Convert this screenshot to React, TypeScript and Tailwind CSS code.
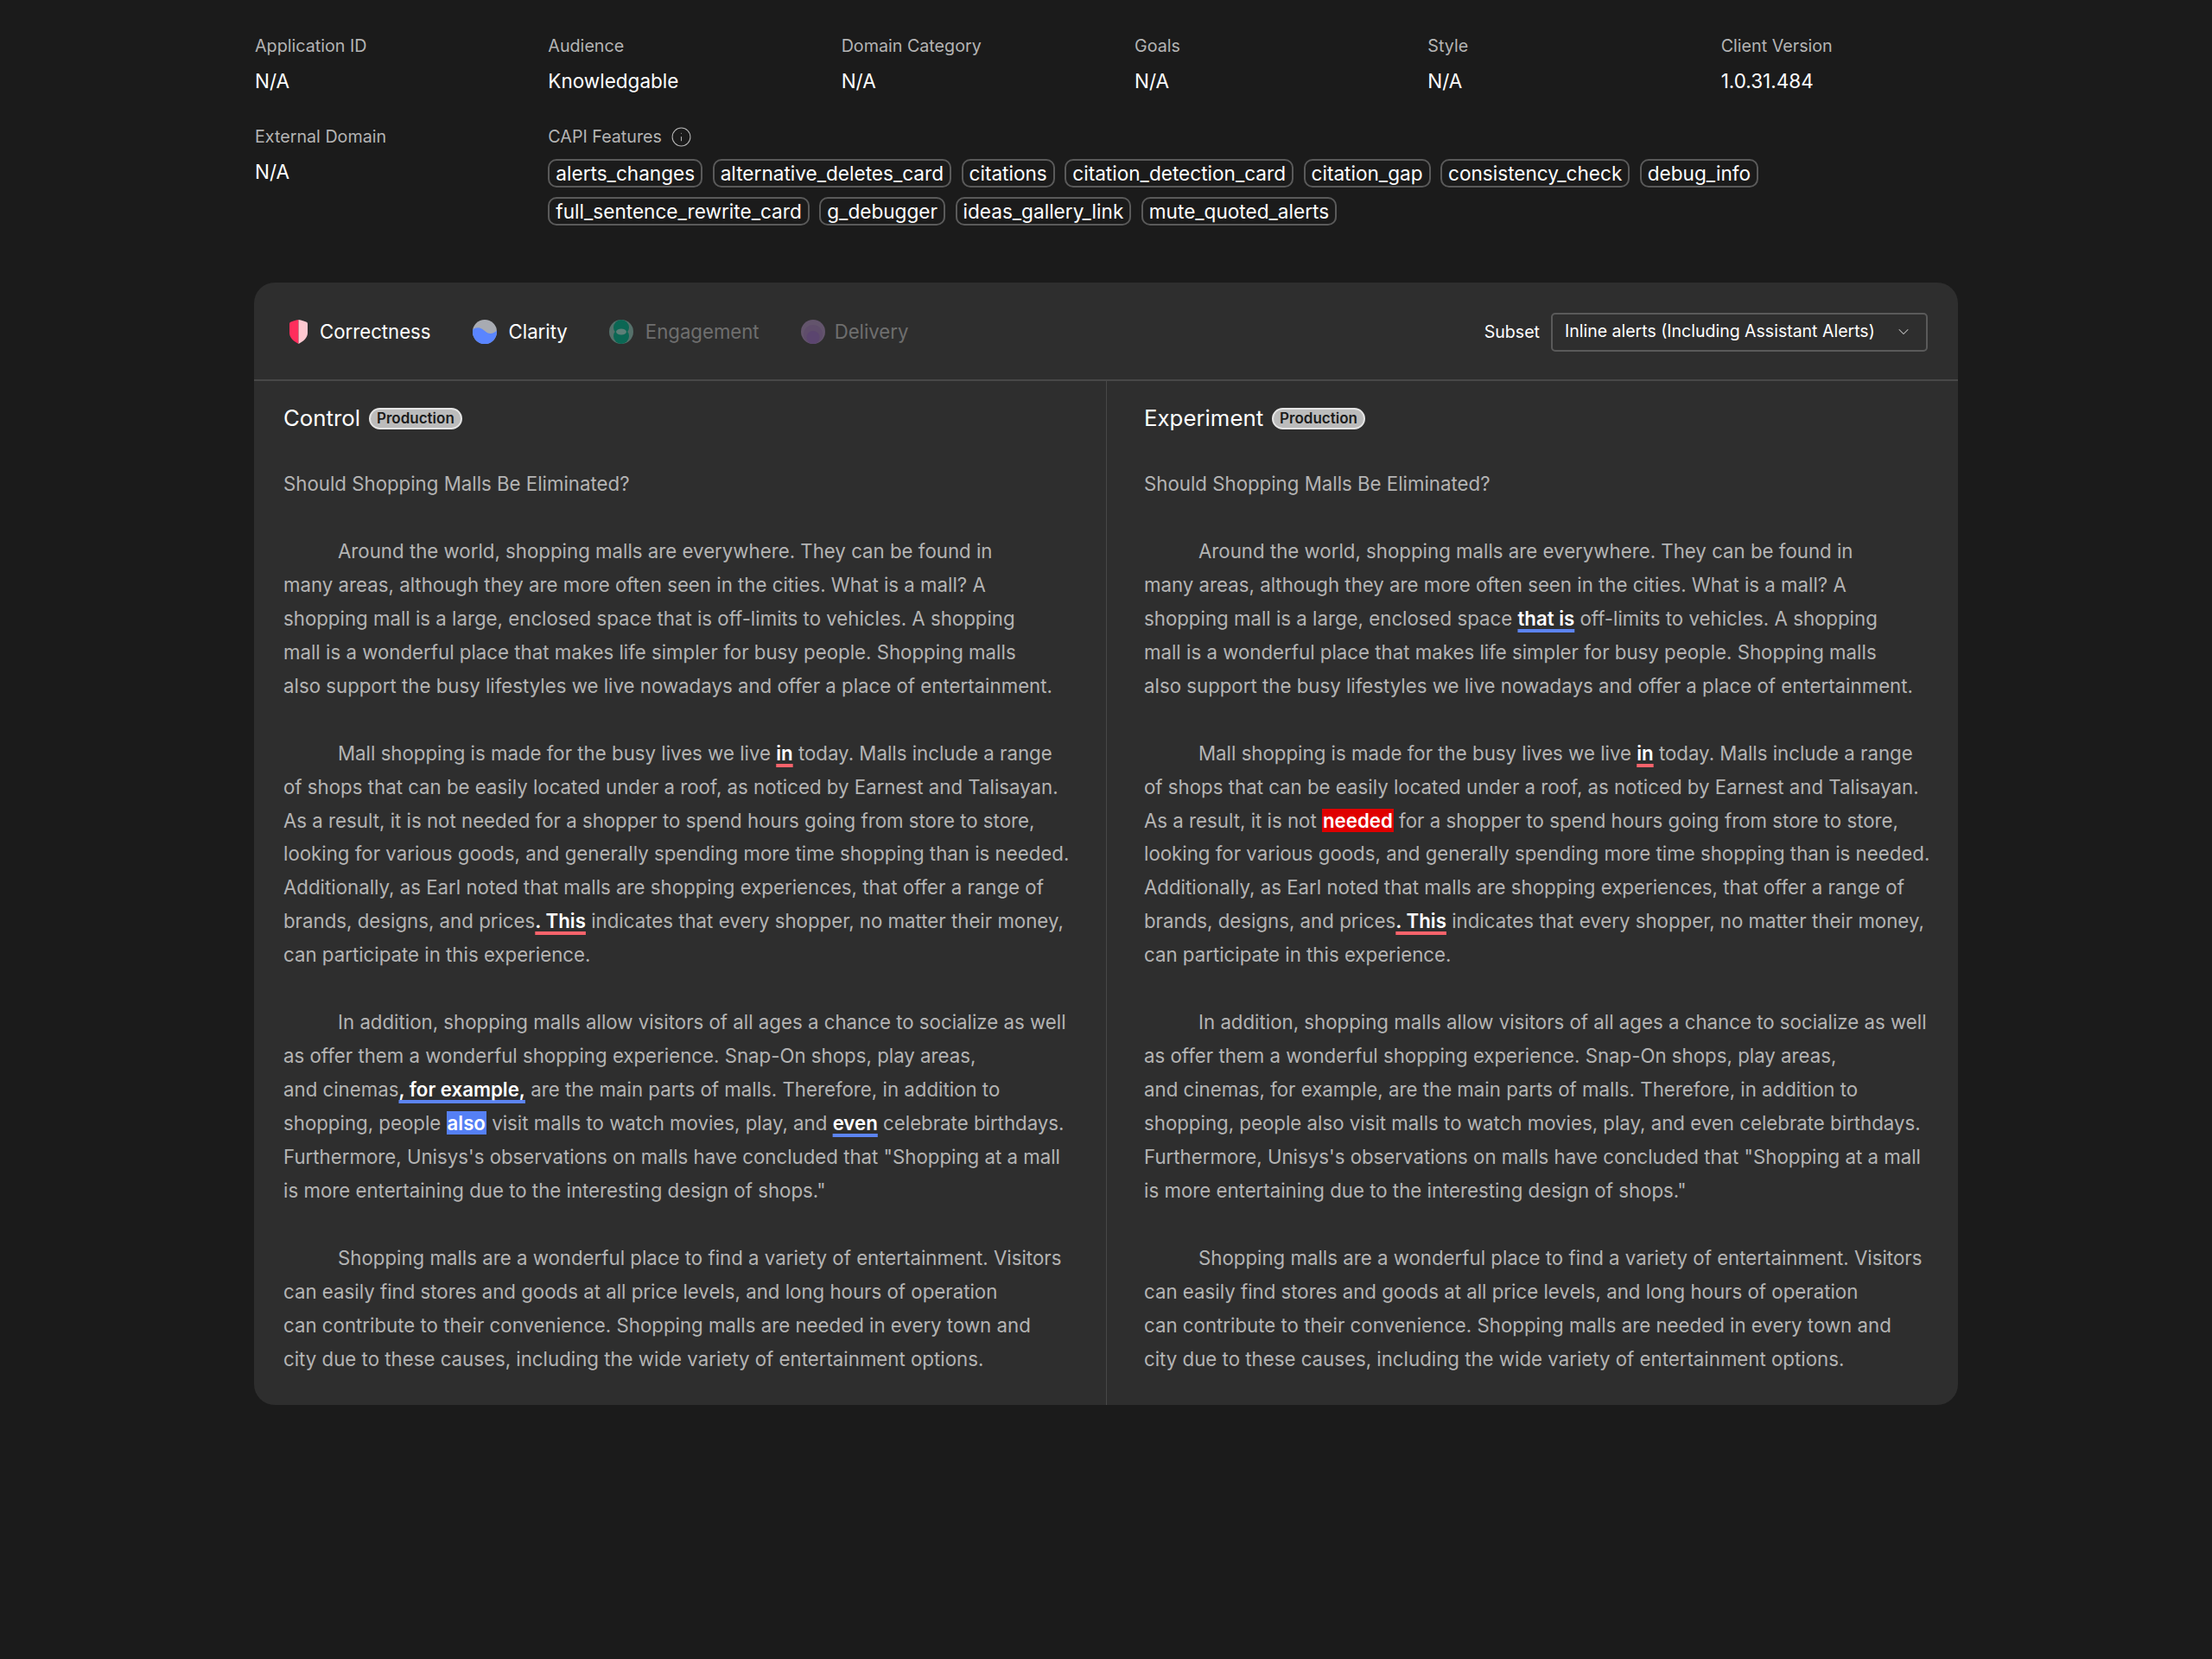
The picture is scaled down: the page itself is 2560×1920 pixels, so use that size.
import { ChevronDown, Info } from "lucide-react";
import type { ReactNode } from "react";

const topFields = [
  { label: "Application ID", value: "N/A" },
  { label: "Audience", value: "Knowledgable" },
  { label: "Domain Category", value: "N/A" },
  { label: "Goals", value: "N/A" },
  { label: "Style", value: "N/A" },
  { label: "Client Version", value: "1.0.31.484" },
];

const capiFeatures = [
  "alerts_changes",
  "alternative_deletes_card",
  "citations",
  "citation_detection_card",
  "citation_gap",
  "consistency_check",
  "debug_info",
  "full_sentence_rewrite_card",
  "g_debugger",
  "ideas_gallery_link",
  "mute_quoted_alerts",
];

function ShieldIcon() {
  return (
    <svg width="21" height="28" viewBox="0 0 21 28">
      <path d="M10.5 0C7 .6 3.5 1.6 1.2 2.7.4 3.1 0 3.7 0 4.6V15.5C0 21 5 25 10.5 28Z" fill="#ff2d5c" />
      <path d="M10.5 0C14 .6 17.5 1.6 19.8 2.7c.8.4 1.2 1 1.2 1.9V15.5C21 21 16 25 10.5 28Z" fill="#ffc8d0" />
    </svg>
  );
}

function ClarityIcon() {
  return (
    <svg width="28" height="28" viewBox="0 0 28 28">
      <circle cx="14" cy="14" r="14" fill="#a8abb2" />
      <path d="M.2 11.5C3 9 7 8.6 10.5 10.5c3.5 2 6 5.5 10 5.5 3 0 5.5-1.5 7.3-3.5A14 14 0 1 1 .2 11.5Z" fill="#5a85ff" />
    </svg>
  );
}

function EngagementIcon() {
  return (
    <svg width="28" height="28" viewBox="0 0 28 28">
      <circle cx="14" cy="14" r="14" fill="#55706a" />
      <circle cx="14" cy="9" r="9" fill="#0b6754" />
      <circle cx="14" cy="19" r="9" fill="#0b6754" />
      <ellipse cx="14" cy="14" rx="6" ry="3.5" fill="#5d7f78" />
    </svg>
  );
}

function DeliveryIcon() {
  return (
    <svg width="28" height="28" viewBox="0 0 28 28">
      <circle cx="14" cy="14" r="14" fill="#63546c" />
      <circle cx="14" cy="17" r="11" fill="#5f4d6b" />
      <circle cx="14" cy="20.5" r="7.5" fill="#5b456f" />
    </svg>
  );
}

function RedLine({ children }: { children: ReactNode }) {
  return (
    <span className="font-semibold text-white underline decoration-[#f9636b] decoration-[3.5px] underline-offset-[4px] [text-decoration-skip-ink:none]">
      {children}
    </span>
  );
}

function BlueLine({ children }: { children: ReactNode }) {
  return (
    <span className="font-semibold text-white underline decoration-[#5c84f2] decoration-[3.5px] underline-offset-[4px] [text-decoration-skip-ink:none]">
      {children}
    </span>
  );
}

function Essay({ experiment }: { experiment: boolean }) {
  return (
    <div className="flex flex-col gap-[38.96px] whitespace-nowrap text-[22.25px] leading-[38.96px] text-[#b4b4b4]">
      <p>Should Shopping Malls Be Eliminated?</p>
      <p className="indent-[63px]">
        Around the world, shopping malls are everywhere. They can be found in
        <br />
        many areas, although they are more often seen in the cities. What is a mall? A
        <br />
        shopping mall is a large, enclosed space {experiment ? <BlueLine>that is</BlueLine> : "that is"} off-limits to vehicles. A shopping
        <br />
        mall is a wonderful place that makes life simpler for busy people. Shopping malls
        <br />
        also support the busy lifestyles we live nowadays and offer a place of entertainment.
      </p>
      <p className="indent-[63px]">
        Mall shopping is made for the busy lives we live <RedLine>in</RedLine> today. Malls include a range
        <br />
        of shops that can be easily located under a roof, as noticed by Earnest and Talisayan.
        <br />
        As a result, it is not{" "}
        {experiment ? <span className="bg-[#e00000] px-[1px] font-semibold text-white">needed</span> : "needed"} for a shopper to spend hours going from store to store,
        <br />
        looking for various goods, and generally spending more time shopping than is needed.
        <br />
        Additionally, as Earl noted that malls are shopping experiences, that offer a range of
        <br />
        brands, designs, and prices<RedLine>. This</RedLine> indicates that every shopper, no matter their money,
        <br />
        can participate in this experience.
      </p>
      <p className="indent-[63px]">
        In addition, shopping malls allow visitors of all ages a chance to socialize as well
        <br />
        as offer them a wonderful shopping experience. Snap-On shops, play areas,
        <br />
        and cinemas{experiment ? ", for example," : <BlueLine>, for example,</BlueLine>} are the main parts of malls. Therefore, in addition to
        <br />
        shopping, people{" "}
        {experiment ? "also" : <span className="bg-[#5580f5] px-[1px] font-semibold text-white">also</span>} visit malls to watch movies, play, and{" "}
        {experiment ? "even" : <BlueLine>even</BlueLine>} celebrate birthdays.
        <br />
        Furthermore, Unisys's observations on malls have concluded that "Shopping at a mall
        <br />
        is more entertaining due to the interesting design of shops."
      </p>
      <p className="indent-[63px]">
        Shopping malls are a wonderful place to find a variety of entertainment. Visitors
        <br />
        can easily find stores and goods at all price levels, and long hours of operation
        <br />
        can contribute to their convenience. Shopping malls are needed in every town and
        <br />
        city due to these causes, including the wide variety of entertainment options.
      </p>
    </div>
  );
}

function ColumnTitle({ title }: { title: string }) {
  return (
    <div className="flex h-[25px] items-center gap-[10px]">
      <span className="text-[25.8px] text-white">{title}</span>
      <span className="rounded-full border-2 border-[#e4e4e4] bg-[#bcbcbc] px-[7px] text-[17px] font-semibold leading-[21px] text-[#1b1b1b]">
        Production
      </span>
    </div>
  );
}

export default function App() {
  return (
    <div className="min-h-[1920px] bg-[#1b1b1b] px-[294px] pt-[40px] font-[Inter,sans-serif]">
      <div className="grid grid-cols-6 gap-x-[64px] gap-y-[35px]">
        {topFields.map((field) => (
          <div key={field.label} className="pl-[1px]">
            <div className="text-[19.7px] leading-[26px] text-[#b4b4b4]">{field.label}</div>
            <div className="mt-[12px] text-[22.5px] leading-[32px] text-white">{field.value}</div>
          </div>
        ))}
        <div className="pl-[1px]">
          <div className="text-[19.7px] leading-[26px] text-[#b4b4b4]">External Domain</div>
          <div className="mt-[12px] text-[22.5px] leading-[32px] text-white">N/A</div>
        </div>
        <div className="col-span-5 pl-[1px]">
          <div className="flex items-center gap-[10px] text-[19.7px] leading-[26px] text-[#b4b4b4]">
            CAPI Features
            <Info size={25} strokeWidth={1} />
          </div>
          <div className="mt-[13px] flex flex-wrap gap-x-[11.5px] gap-y-[11px]">
            {capiFeatures.map((feature) => (
              <span
                key={feature}
                className="rounded-[10px] border-2 border-[#5a5a5a] px-[7px] text-[22.6px] leading-[29px] text-white"
              >
                {feature}
              </span>
            ))}
          </div>
        </div>
      </div>

      <div className="mt-[66px] h-[1299px] rounded-[24px] bg-[#2e2e2e]">
        <div className="flex h-[114px] items-center justify-between border-b-2 border-[#484848] pl-[41px] pr-[35px] pt-[2px]">
          <div className="flex items-center gap-[48px] text-[22.2px]">
            <div className="flex items-center gap-[14px] text-white">
              <ShieldIcon />
              Correctness
            </div>
            <div className="flex items-center gap-[14px] text-white">
              <ClarityIcon />
              Clarity
            </div>
            <div className="flex items-center gap-[14px] text-[#6e6e6e]">
              <EngagementIcon />
              Engagement
            </div>
            <div className="flex items-center gap-[11px] text-[#6e6e6e]">
              <DeliveryIcon />
              Delivery
            </div>
          </div>
          <div className="flex items-center gap-[13px]">
            <span className="pt-[2px] text-[19.6px] text-white">Subset</span>
            <div className="flex h-[45px] w-[436px] items-center justify-between rounded-[5px] border-2 border-[#5a5a5a] pl-[14px] pr-[16px] text-[19.5px] text-white">
              Inline alerts (Including Assistant Alerts)
              <ChevronDown size={20} strokeWidth={1.25} className="text-[#c4c4c4]" />
            </div>
          </div>
        </div>
        <div className="grid h-[1185px] grid-cols-[987px_1fr]">
          <div className="border-r border-[#484848] pl-[34px] pt-[31px]">
            <ColumnTitle title="Control" />
            <div className="mt-[44px]">
              <Essay experiment={false} />
            </div>
          </div>
          <div className="pl-[43px] pt-[31px]">
            <ColumnTitle title="Experiment" />
            <div className="mt-[44px]">
              <Essay experiment={true} />
            </div>
          </div>
        </div>
      </div>
    </div>
  );
}
